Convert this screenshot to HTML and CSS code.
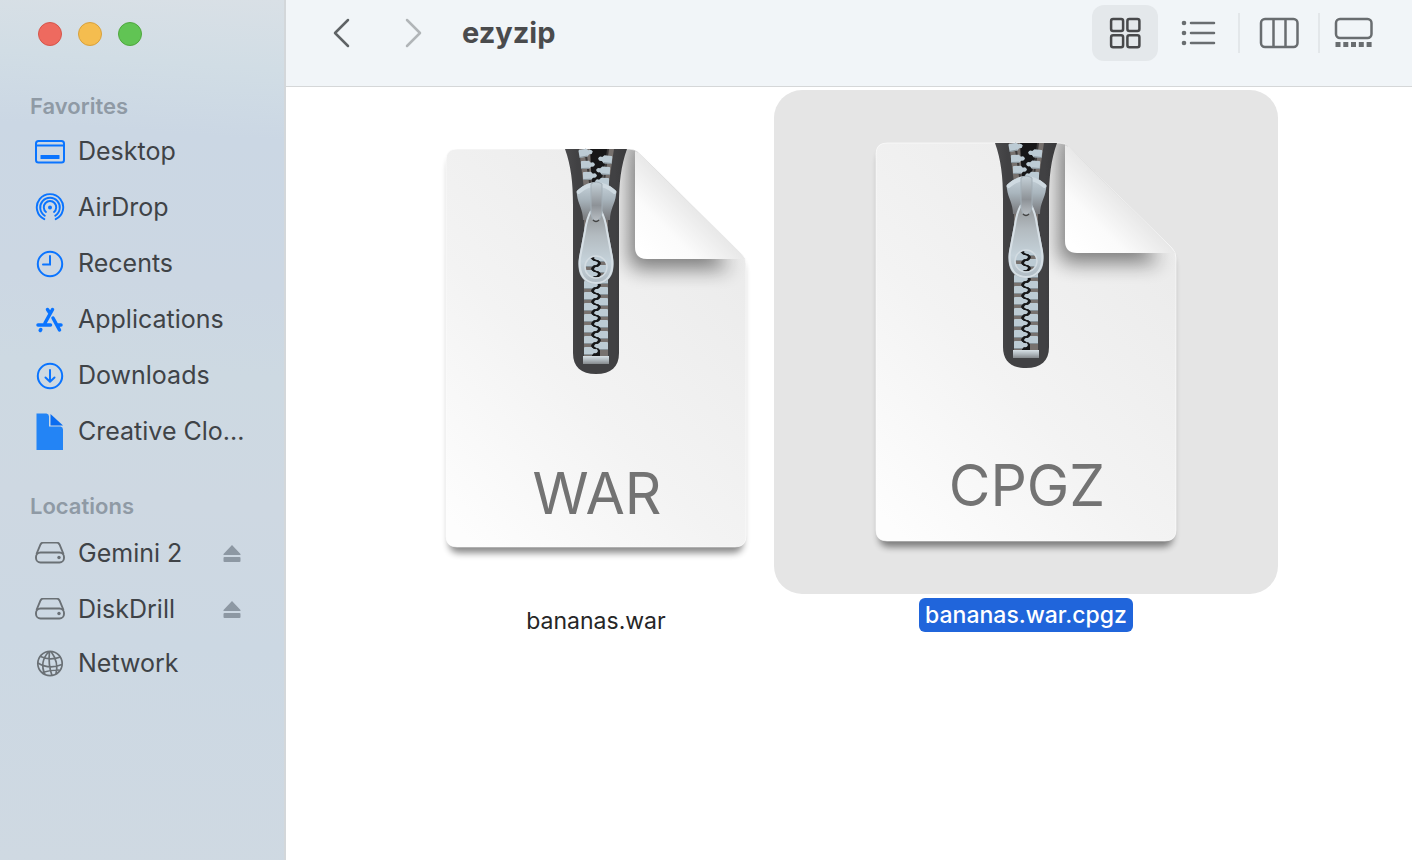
FILE: index.html
```html
<!DOCTYPE html>
<html lang="en">
<head>
<meta charset="utf-8">
<title>ezyzip</title>
<link rel="stylesheet" href="styles.css">
</head>
<body>
<svg class="defs" aria-hidden="true">
  <defs>
    <linearGradient id="paper" x1="0.1" y1="1" x2="0.8" y2="0.1">
      <stop offset="0" stop-color="#fdfdfd"/><stop offset="0.45" stop-color="#f3f3f3"/><stop offset="1" stop-color="#ebebeb"/>
    </linearGradient>
    <linearGradient id="flap" gradientUnits="userSpaceOnUse" x1="197" y1="102" x2="247" y2="52">
      <stop offset="0" stop-color="#fff"/><stop offset="0.45" stop-color="#fbfbfb"/><stop offset="1" stop-color="#e6e6e6"/>
    </linearGradient>
    <linearGradient id="metal" x1="0" y1="0" x2="0" y2="1">
      <stop offset="0" stop-color="#c9d5dd"/><stop offset="0.45" stop-color="#a9b5bd"/><stop offset="1" stop-color="#77787b"/>
    </linearGradient>
    <linearGradient id="bridge" x1="0" y1="0" x2="0" y2="1">
      <stop offset="0" stop-color="#c5d1d8"/><stop offset="0.6" stop-color="#8d9297"/><stop offset="1" stop-color="#b9bfc4"/>
    </linearGradient>
    <linearGradient id="pull" x1="0" y1="0" x2="0" y2="1">
      <stop offset="0" stop-color="#909395"/><stop offset="0.35" stop-color="#b3bbc0"/><stop offset="0.7" stop-color="#c5d2da"/><stop offset="1" stop-color="#aeb9c1"/>
    </linearGradient>
    <linearGradient id="stop" x1="0" y1="0" x2="0" y2="1">
      <stop offset="0" stop-color="#d7e0e5"/><stop offset="0.5" stop-color="#b0b8bd"/><stop offset="1" stop-color="#85898c"/>
    </linearGradient>
    <linearGradient id="tape" x1="0" x2="1">
      <stop offset="0" stop-color="#4a4a4c"/><stop offset="0.2" stop-color="#414143"/><stop offset="0.8" stop-color="#414143"/><stop offset="1" stop-color="#39393b"/>
    </linearGradient>
    <filter id="drop" x="-10%" y="-10%" width="120%" height="120%">
      <feGaussianBlur stdDeviation="4"/>
    </filter>
    <filter id="soft" x="-40%" y="-40%" width="180%" height="180%">
      <feGaussianBlur stdDeviation="10"/>
    </filter>
    <path id="sheet" d="M11 0H183Q189 0 193 4L296 105Q300 109 300 115V387Q300 398 289 398H11Q0 398 0 387V11Q0 0 11 0Z"/>
    <clipPath id="sheet-clip"><use href="#sheet"/></clipPath>
    <g id="tooth">
      <path d="M0 -3Q0 -4 1 -4H8L10 -2Q13 -3 14 0Q13 3 10 2L8 4H1Q0 4 0 3Z" fill="#bccbd4"/>
      <path d="M0 3.500H8" stroke="#87939a" fill="none"/>
    </g>
    <g id="archive">
      <use href="#sheet" fill="#000" opacity="0.46" filter="url(#drop)" transform="translate(3 8) scale(.98 .995)"/>
      <use href="#sheet" fill="url(#paper)"/>
      <g clip-path="url(#sheet-clip)">
        <path d="M183 -24V107Q183 120 195 120H284L225 40Z" fill="#000" opacity="0.48" filter="url(#soft)"/>
      </g>
      <use href="#sheet" fill="none" stroke="#fff" stroke-opacity="0.6"/>
      <path d="M189 2V98Q189 110 201 110H299L294 104L193 4Z" fill="url(#flap)"/>
      <path d="M119 0H181C175 17 173 33 173 57V204C173 218 165 225 150 225C135 225 127 218 127 204V57C127 33 125 17 119 0Z" fill="url(#tape)"/>
      <path d="M133 0H168L162 40V208H138V40Z" fill="#77716e"/>
      <path d="M144 0H162L154 40V207H146V40Z" fill="#171718"/>
      <path d="M139 0L145 40M162 0L157 40" stroke="#3b3939" stroke-width="2"/>
      <g>
        <use href="#tooth" transform="translate(133 5) rotate(-10)"/>
        <use href="#tooth" transform="translate(135 16) rotate(-2)"/>
        <use href="#tooth" transform="translate(137 27) rotate(-2)"/>
        <use href="#tooth" transform="translate(166 11) rotate(6) scale(-1 1)"/>
        <use href="#tooth" transform="translate(164 22) rotate(4) scale(-1 1)"/>
        <use href="#tooth" transform="translate(163 33) rotate(2) scale(-1 1)"/>
      </g>
      <g>
        <use href="#tooth" x="138" y="114"/><use href="#tooth" x="138" y="125"/><use href="#tooth" x="138" y="136"/>
        <use href="#tooth" x="138" y="147"/><use href="#tooth" x="138" y="158"/><use href="#tooth" x="138" y="169"/>
        <use href="#tooth" x="138" y="180"/><use href="#tooth" x="138" y="191"/><use href="#tooth" x="138" y="202"/>
        <g transform="translate(162 0) scale(-1 1)">
          <use href="#tooth" y="109"/><use href="#tooth" y="120"/><use href="#tooth" y="131"/><use href="#tooth" y="142"/>
          <use href="#tooth" y="153"/><use href="#tooth" y="164"/><use href="#tooth" y="175"/><use href="#tooth" y="186"/><use href="#tooth" y="197"/>
        </g>
      </g>
      <path d="M150 106q-8 3 0 5.500q8 2.500 0 5.500q-8 2.500 0 5.500q8 2.500 0 5.500q-8 2.500 0 5.500q8 2.500 0 5.500q-8 2.500 0 5.500q8 2.500 0 5.500q-8 2.500 0 5.500q8 2.500 0 5.500q-8 2.500 0 5.500q8 2.500 0 5.500q-8 2.500 0 5.500q8 2.500 0 5.500q-8 2.500 0 5.500q8 2.500 0 5.500q-8 2.500 0 5.500" fill="none" stroke="#171718" stroke-width="1.800"/>
      <rect x="137" y="207" width="26" height="8" fill="url(#stop)"/>
      <path d="M137 71C137 60 132 55 131 46Q130 42 133 40Q141 33 150 33Q160 33 168 40Q171 42 170 46C169 55 164 60 164 71Z" fill="url(#metal)"/>
      <path d="M132.500 43Q141 35.500 150.500 35.500Q160 35.500 168.500 43" stroke="#cfdae1" stroke-width="4" stroke-linecap="round" fill="none"/>
      <path fill-rule="evenodd" d="M146 60Q150 72 155 60C159 66 161 75 162 82L167 108C170 128 161 135 150 135C139 135 130 128 133 108L138 82C139 75 142 66 146 60ZM150 107.500A10.500 10.500 0 1 0 150 128.500A10.500 10.500 0 1 0 150 107.500Z" fill="url(#pull)"/>
      <path d="M145 62C142 67 140 75 139 82L134 109C132 127 140 134 150 134C160 134 168 127 166 109L161 82C160 75 158 67 155 62" fill="none" stroke="#d6dfe5" stroke-width="2"/>
      <circle cx="150" cy="118" r="11" fill="none" stroke="#d3dce2" stroke-width="1.500"/>
      <path d="M145 35Q150 31 156 35V64Q154 72 150 72Q146 72 145 64Z" fill="url(#bridge)" stroke="#a3afb7" stroke-width="1"/>
      <path d="M147 71Q150 74 153 71" fill="none" stroke="#444" stroke-width="1.500"/>
    </g>
    <g id="disk" fill="none" stroke="#6a7075" stroke-width="1.900">
      <path d="M1.500 13L5.500 3.500Q6.500 1.500 8.500 1.500H21.500Q23.500 1.500 24.500 3.500L28.500 13"/>
      <rect x="1" y="11.500" width="28" height="10" rx="4.500"/>
      <circle cx="24" cy="16.500" r="1.700" fill="#6a7075" stroke="none"/>
    </g>
    <path id="eject" d="M9 0L17.500 9Q18 10 17 10H1Q0 10 .5 9ZM1.500 12H16.500Q17.500 12 17.500 13V16Q17.500 17 16.500 17H1.500Q.5 17 .5 16V13Q.5 12 1.500 12Z" fill="#8d98a3"/>
  </defs>
</svg>

<div class="window">
  <aside class="sidebar">
    <div class="lights">
      <button class="light light-close" aria-label="Close"></button>
      <button class="light light-minimize" aria-label="Minimize"></button>
      <button class="light light-zoom" aria-label="Zoom"></button>
    </div>
    <nav class="group" aria-labelledby="favorites">
      <h2 class="group-title" id="favorites">Favorites</h2>
      <a class="place" href="#desktop">
        <svg class="icon" viewBox="0 0 30 30"><g fill="none" stroke="#0a74ff" stroke-width="2"><rect x="1" y="5" width="28" height="21.500" rx="2.500"/><path d="M1 9.500H29"/></g><rect x="5.500" y="19" width="19" height="4" rx=".5" fill="#0a74ff"/></svg>
        <span>Desktop</span></a>
      <a class="place" href="#airdrop">
        <svg class="icon" viewBox="0 0 30 30" fill="none" stroke="#0a74ff" stroke-width="1.900" stroke-linecap="round"><path d="M9.300 27.200A13.200 13.200 0 1 1 20.700 27.200"/><path d="M9.800 23.800A9.800 9.800 0 1 1 20.200 23.800"/><path d="M11 20A6.200 6.200 0 1 1 19 20"/><circle cx="15" cy="15.500" r="2" fill="#0a74ff" stroke="none"/></svg>
        <span>AirDrop</span></a>
      <a class="place" href="#recents">
        <svg class="icon" viewBox="0 0 30 30" fill="none" stroke="#0a74ff" stroke-width="2" stroke-linecap="round"><circle cx="15" cy="16" r="12.200"/><path d="M15 8V16.500H8"/></svg>
        <span>Recents</span></a>
      <a class="place" href="#applications">
        <svg class="icon" viewBox="0 0 30 30" fill="none" stroke="#0a74ff" stroke-width="3.500" stroke-linecap="round"><path d="M17.500 5.500L10 19M12.500 5.500L14.500 8.500M3 21H15.500M22.500 21H26M18 14L24.500 26M5.800 25.500L5.200 26.500"/></svg>
        <span>Applications</span></a>
      <a class="place" href="#downloads">
        <svg class="icon" viewBox="0 0 30 30" fill="none" stroke="#0a74ff" stroke-width="2" stroke-linecap="round" stroke-linejoin="round"><circle cx="15" cy="16" r="12.200"/><path d="M15 10V21.500M10.500 17.500L15 21.700L19.500 17.500"/></svg>
        <span>Downloads</span></a>
      <a class="place" href="#creative-cloud">
        <svg class="icon icon-tall" viewBox="0 0 30 38"><path d="M1.500 1.500H11.500Q14 2 14 4.500V14.500H25.500Q28 15 28 17.500V38H1.500Z" fill="#2384f5"/><path d="M15.500 2L28 13.500H15.500Z" fill="#0a6cf0"/></svg>
        <span>Creative Clo...</span></a>
    </nav>
    <nav class="group" aria-labelledby="locations">
      <h2 class="group-title group-title-spaced" id="locations">Locations</h2>
      <div class="mount">
        <a class="place" href="#gemini"><svg class="icon icon-disk" viewBox="0 1 30 23"><use href="#disk"/></svg><span>Gemini 2</span></a>
        <button class="eject" aria-label="Eject Gemini 2"><svg class="eject-icon" viewBox="0 0 18 17"><use href="#eject"/></svg></button>
      </div>
      <div class="mount">
        <a class="place" href="#diskdrill"><svg class="icon icon-disk" viewBox="0 1 30 23"><use href="#disk"/></svg><span>DiskDrill</span></a>
        <button class="eject" aria-label="Eject DiskDrill"><svg class="eject-icon" viewBox="0 0 18 17"><use href="#eject"/></svg></button>
      </div>
      <a class="place place-short" href="#network">
        <svg class="icon" viewBox="0 0 30 30" fill="none" stroke="#6a7075" stroke-width="1.700"><circle cx="15" cy="15.500" r="12.200"/><path d="M14 3.500Q4 14 10 26.500M14.500 3.500Q13 17 17 27.500M16 3.500Q24 14 21 26M5.500 8.500Q15 13 25.500 9M3 15Q14 22 27 16.500M7 24.500Q15 22 24.500 22"/></svg>
        <span>Network</span></a>
    </nav>
  </aside>

  <main class="main">
    <header class="toolbar">
      <button class="arrow" aria-label="Back"><svg class="chevron" viewBox="0 0 18 30"><path d="M16 2L3 15L16 28" stroke="#5f6366"/></svg></button>
      <button class="arrow" aria-label="Forward"><svg class="chevron" viewBox="0 0 18 30"><path d="M3 2L16 15L3 28" stroke="#b1b5b8"/></svg></button>
      <h1 class="title">ezyzip</h1>
      <div class="views">
        <button class="view view-active" aria-label="Icons" aria-pressed="true"><svg class="view-icon" viewBox="0 0 40 32" fill="none" stroke="#48494b" stroke-width="2.500"><rect x="6.100" y="2.100" width="12" height="12" rx="2"/><rect x="22.400" y="2.100" width="12" height="12" rx="2"/><rect x="6.100" y="18.300" width="12" height="12" rx="2"/><rect x="22.400" y="18.300" width="12" height="12" rx="2"/></svg></button>
        <button class="view" aria-label="List"><svg class="view-icon" viewBox="0 0 40 32" stroke="#696d70" stroke-width="2.500" stroke-linecap="round"><path d="M13 6H36M13 16H36M13 26H36"/><g fill="#696d70" stroke="none"><circle cx="6" cy="6" r="2.300"/><circle cx="6" cy="16" r="2.300"/><circle cx="6" cy="26" r="2.300"/></g></svg></button>
        <span class="divider"></span>
        <button class="view view-columns" aria-label="Columns"><svg class="view-icon" viewBox="0 0 40 32" fill="none" stroke="#696d70" stroke-width="2.500"><rect x="2" y="2" width="36.500" height="28" rx="4"/><path d="M14.500 2V30M26.500 2V30"/></svg></button>
        <span class="divider"></span>
        <button class="view view-last" aria-label="Gallery"><svg class="view-icon" viewBox="0 0 40 32"><rect x="2" y="2" width="35.500" height="19" rx="4" fill="none" stroke="#696d70" stroke-width="2.500"/><path d="M1.500 25h5v5h-5zM9.300 25h5v5h-5zM17 25h5v5h-5zM24.800 25h5v5h-5zM32.600 25h5v5h-5z" fill="#696d70"/></svg></button>
      </div>
    </header>
    <section class="files">
      <button class="file file-lower">
        <svg class="tile" viewBox="0 0 504 504"><use href="#archive" x="102" y="53"/><text class="kind" x="253" y="418">WAR</text></svg>
        <span class="name">bananas.war</span>
      </button>
      <button class="file file-selected" aria-pressed="true">
        <svg class="tile" viewBox="0 0 504 504"><use href="#archive" x="102" y="53"/><text class="kind" x="253" y="416">CPGZ</text></svg>
        <span class="name">bananas.war.cpgz</span>
      </button>
    </section>
  </main>
</div>
</body>
</html>
```
FILE: styles.css
```css
* { box-sizing: border-box; }

body {
  margin: 0;
  font-family: Inter, "Liberation Sans", sans-serif;
  background: #fff;
}

button {
  font: inherit;
  padding: 0;
  border: 0;
  background: none;
}

svg { display: block; flex: none; }

.defs { position: absolute; width: 0; height: 0; }

.window {
  display: flex;
  min-height: 100vh;
}

.sidebar {
  flex: none;
  width: 286px;
  border-right: 2px solid #d3d7da;
  background: linear-gradient(184deg, #d9e0e6 0%, #d1dde5 8%, #cbd7e4 16%, #ccd7e3 33%, #cdd9e2 43%, #ced8e2 58%, #ccd8e3 74%, #cfd9e2 100%);
}

.lights {
  display: flex;
  gap: 16px;
  padding: 22px 38px 42px;
}

.light {
  width: 24px;
  height: 24px;
  border-radius: 50%;
}

.light-close { background: #ee6a5f; border: 1px solid #d6554a; }
.light-minimize { background: #f5bd4f; border: 1px solid #d8a13c; }
.light-zoom { background: #61c454; border: 1px solid #4fa73e; }

.group { margin-bottom: 28px; }

.group-title {
  margin: 0;
  padding-left: 30px;
  font-size: 22px;
  line-height: 36px;
  font-weight: 600;
  color: #8f9aa5;
}

.group-title-spaced { margin-bottom: 2px; }

.place {
  display: flex;
  align-items: center;
  gap: 13px;
  height: 56px;
  padding: 0 0 2px 35px;
  font-size: 25px;
  line-height: 32px;
  color: #3f4347;
  text-decoration: none;
  white-space: nowrap;
}

.place-short { height: 52px; }

.icon { width: 30px; height: 30px; }
.icon-tall { height: 38px; }
.icon-disk { height: 23px; }

.mount {
  display: flex;
  align-items: center;
  justify-content: space-between;
  padding-right: 43px;
}

.eject { padding-bottom: 2px; }
.eject-icon { width: 18px; height: 17px; }

.main {
  flex: 1;
  min-width: 0;
}

.toolbar {
  display: flex;
  align-items: center;
  height: 87px;
  padding: 0 31px 20px 46px;
  border-bottom: 1px solid #d5d7d8;
  background: #f1f5f8;
}

.arrow { margin-right: 54px; }
.arrow + .arrow { margin-right: 40px; }

.chevron {
  width: 18px;
  height: 30px;
  fill: none;
  stroke-width: 2.5px;
  stroke-linecap: round;
  stroke-linejoin: round;
}

.title {
  margin: 0;
  font-size: 29px;
  line-height: 36px;
  font-weight: 700;
  color: #4a4b4d;
}

.views {
  display: flex;
  align-items: center;
  gap: 7px;
  margin-left: auto;
}

.view {
  display: flex;
  align-items: center;
  justify-content: center;
  width: 66px;
  height: 56px;
  border-radius: 12px;
}

.view-active { background: #e4e8eb; }
.view-columns { width: 64px; }
.view-last { width: 54px; }
.view-icon { width: 40px; height: 32px; }

.divider {
  width: 2px;
  height: 40px;
  background: #e3e7ea;
}

.files {
  display: flex;
  align-items: flex-start;
  padding: 3px 95px;
}

.file {
  display: flex;
  flex: none;
  flex-direction: column;
  align-items: center;
  gap: 4px;
  width: 430px;
}

.file-lower { margin-top: 6px; }

.tile {
  width: 504px;
  height: 504px;
  border-radius: 28px;
}

.file-selected .tile { background: #e5e5e5; }

.kind {
  font-size: 57px;
  fill: #737373;
  text-anchor: middle;
}

.name {
  padding: 0 6px;
  border-radius: 6px;
  font-size: 23px;
  line-height: 34px;
  color: #262626;
}

.file-selected .name {
  background: #2065db;
  font-weight: 500;
  color: #fff;
}
```
